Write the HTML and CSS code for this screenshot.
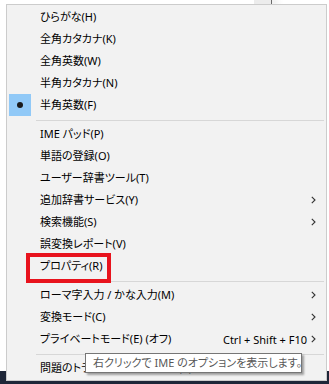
FILE: index.html
```html
<!DOCTYPE html>
<html lang="ja">
<head>
<meta charset="utf-8">
<link rel="stylesheet" href="styles.css">
</head>
<body>
<div class="page">
  <div class="top-tab"></div>
  <div class="taskbar"></div>
  <div class="menu">
    <div class="item"><span class="label">ひらがな(H)</span></div>
    <div class="item"><span class="label">全角カタカナ(K)</span></div>
    <div class="item"><span class="label">全角英数(W)</span></div>
    <div class="item"><span class="label">半角カタカナ(N)</span></div>
    <div class="item checked"><span class="check"><span class="dot"></span></span><span class="label">半角英数(F)</span></div>
    <div class="sep"></div>
    <div class="item"><span class="label">IME パッド(P)</span></div>
    <div class="item"><span class="label">単語の登録(O)</span></div>
    <div class="item"><span class="label">ユーザー辞書ツール(T)</span></div>
    <div class="item"><span class="label">追加辞書サービス(Y)</span><span class="arrow"><svg width="5" height="8" viewBox="0 0 5 8"><path d="M0.8 0.8 L4 4 L0.8 7.2" fill="none" stroke="#333" stroke-width="1.1"/></svg></span></div>
    <div class="item"><span class="label">検索機能(S)</span><span class="arrow"><svg width="5" height="8" viewBox="0 0 5 8"><path d="M0.8 0.8 L4 4 L0.8 7.2" fill="none" stroke="#333" stroke-width="1.1"/></svg></span></div>
    <div class="item"><span class="label">誤変換レポート(V)</span></div>
    <div class="item"><span class="label">プロパティ(R)</span><span class="highlight"></span></div>
    <div class="sep"></div>
    <div class="item"><span class="label">ローマ字入力 / かな入力(M)</span><span class="arrow"><svg width="5" height="8" viewBox="0 0 5 8"><path d="M0.8 0.8 L4 4 L0.8 7.2" fill="none" stroke="#333" stroke-width="1.1"/></svg></span></div>
    <div class="item"><span class="label">変換モード(C)</span><span class="arrow"><svg width="5" height="8" viewBox="0 0 5 8"><path d="M0.8 0.8 L4 4 L0.8 7.2" fill="none" stroke="#333" stroke-width="1.1"/></svg></span></div>
    <div class="item"><span class="label">プライベートモード(E) (オフ)</span><span class="accel">Ctrl + Shift + F10</span><span class="arrow"><svg width="5" height="8" viewBox="0 0 5 8"><path d="M0.8 0.8 L4 4 L0.8 7.2" fill="none" stroke="#333" stroke-width="1.1"/></svg></span></div>
    <div class="sep"></div>
    <div class="item"><span class="label">問題のトラブルシューティング(B)</span></div>
  </div>
  <div class="tooltip">右クリックで IME のオプションを表示します。</div>
</div>
</body>
</html>
```

FILE: styles.css
```css
html, body {
  margin: 0;
  padding: 0;
  background: #ffffff;
}
body {
  font-family: "Noto Sans", "Noto Sans CJK JP", sans-serif;
  font-size: 11px;
  font-feature-settings: "palt";
  color: #000;
}
.page {
  position: relative;
  width: 329px;
  height: 384px;
  overflow: hidden;
}
.top-tab {
  position: absolute;
  left: 254px;
  top: 0;
  width: 17px;
  height: 4px;
  background: #ececec;
  border-right: 1px solid #6a6a6a;
  box-shadow: 6px 0 6px rgba(0,0,0,0.12);
}
.taskbar {
  position: absolute;
  left: 0;
  right: 0;
  top: 371px;
  bottom: 0;
  background: #1e2638;
}
.menu {
  position: relative;
  margin: 4px 0 0 6px;
  width: 319px;
  border: 1px solid #cccccc;
  background: #f2f2f2;
  padding: 1px 0;
}
.item {
  position: relative;
  height: 22px;
  display: flex;
  align-items: center;
  padding-left: 33px;
  padding-right: 10px;
}
.label {
  flex: 1;
  white-space: nowrap;
  line-height: 22px;
}
.accel {
  white-space: nowrap;
  margin-right: 4px;
}
.arrow {
  display: flex;
  width: 5px;
  height: 8px;
}
.arrow svg { display: block; }
.check {
  position: absolute;
  left: 2px;
  top: 0;
  width: 22px;
  height: 22px;
  background: #91c9f7;
  display: flex;
  align-items: center;
  justify-content: center;
}
.dot {
  width: 6px;
  height: 6px;
  border-radius: 50%;
  background: #1a1a1a;
}
.sep {
  height: 1px;
  background: #d7d7d7;
  margin: 4px 2px 2px 29px;
}
.highlight {
  position: absolute;
  left: 19px;
  top: -2px;
  width: 85px;
  height: 30px;
  box-sizing: border-box;
  border: 4px solid #e8131d;
}
.tooltip {
  position: absolute;
  left: 85px;
  top: 353px;
  width: 217px;
  height: 20px;
  box-sizing: border-box;
  border: 1px solid #767676;
  background: #ffffff;
  color: #575757;
  padding-left: 7px;
  line-height: 18px;
  white-space: nowrap;
  box-shadow: 2px 2px 2px rgba(0,0,0,0.35);
}
```
